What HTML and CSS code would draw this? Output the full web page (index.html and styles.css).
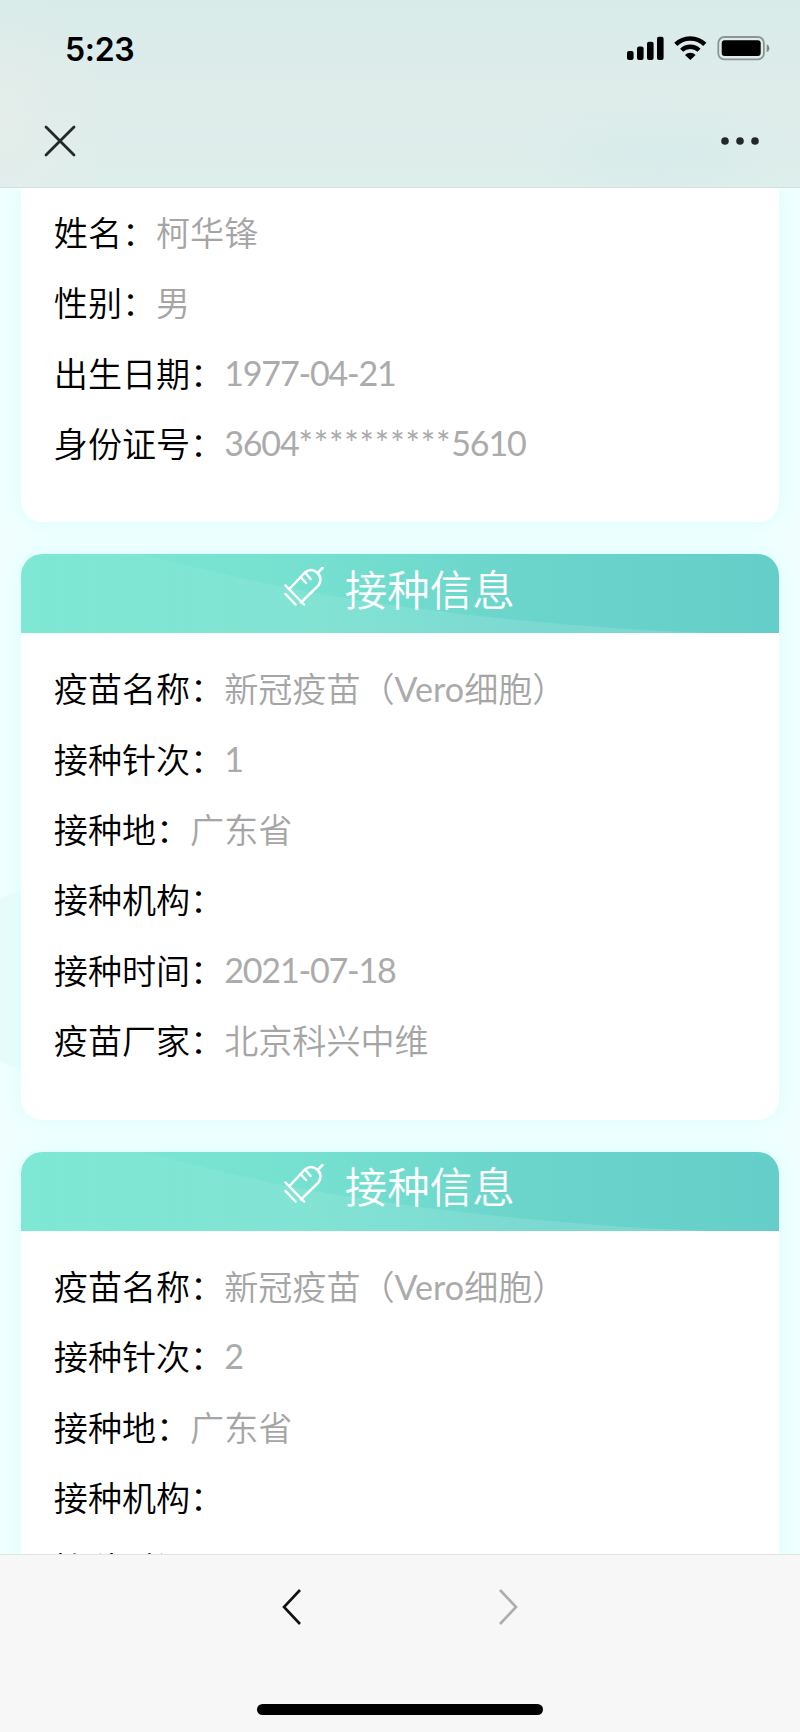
FILE: index.html
```html
<!DOCTYPE html>
<html lang="zh-CN">
<head>
    <meta charset="UTF-8">
    <meta name="viewport" content="width=device-width, initial-scale=1.0">
    <title>接种信息</title>
    <link rel="stylesheet" href="styles.css">
</head>
<body>
    <header class="top-bar">
        <div class="status-bar">
            <span class="time">5:23</span>
            <svg class="status-icons" width="144" height="26" viewBox="0 0 144 26">
                <!-- signal -->
                <rect x="1" y="15" width="6.6" height="9" rx="2"/>
                <rect x="11" y="10.5" width="6.6" height="13.5" rx="2"/>
                <rect x="21" y="5.7" width="6.6" height="18.3" rx="2"/>
                <rect x="31" y="0.7" width="6.6" height="23.3" rx="2"/>
                <!-- wifi -->
                <g fill="none" stroke="#000">
                    <path d="M49.8 8.4a20.6 20.6 0 0 1 29 0" stroke-width="4.5"/>
                    <path d="M55.6 14.3a12.4 12.4 0 0 1 17.4 0" stroke-width="4.3"/>
                </g>
                <path d="M59 18.9a7.6 7.6 0 0 1 10.6 0L64.3 24z"/>
                <!-- battery -->
                <rect x="92.3" y="1" width="45.6" height="22.4" rx="6" fill="none" stroke="#8b9594" stroke-width="1.8"/>
                <rect x="95.7" y="4.3" width="39" height="15.8" rx="3"/>
                <path d="M140.7 8.3q2.7 1.2 2.7 4t-2.7 4z" fill="#7f8988"/>
            </svg>
        </div>
        <nav class="nav-bar">
            <svg width="32" height="32" viewBox="0 0 32 32">
                <path d="M2 2l28 28M30 2L2 30" stroke="#222827" stroke-width="2.8" stroke-linecap="round"/>
            </svg>
            <svg width="40" height="10" viewBox="0 0 40 10" fill="#222827">
                <circle cx="5" cy="5" r="3.8"/>
                <circle cx="20" cy="5" r="3.8"/>
                <circle cx="35" cy="5" r="3.8"/>
            </svg>
        </nav>
    </header>

    <main class="content">
        <section class="card card-first">
            <div class="row"><span>姓名：</span><span class="value">柯华锋</span></div>
            <div class="row"><span>性别：</span><span class="value">男</span></div>
            <div class="row"><span>出生日期：</span><span class="value num">1977-04-21</span></div>
            <div class="row"><span>身份证号：</span><span class="value num">3604<span class="mask">**********</span>5610</span></div>
        </section>

        <section class="card">
            <div class="card-title">
                <svg class="wave" viewBox="0 0 758 79" preserveAspectRatio="none">
                    <defs>
                        <linearGradient id="waveFill">
                            <stop offset="0" stop-color="#fff" stop-opacity="0"/>
                            <stop offset="0.4" stop-color="#fff" stop-opacity="0.09"/>
                            <stop offset="1" stop-color="#fff" stop-opacity="0.14"/>
                        </linearGradient>
                    </defs>
                    <path fill="url(#waveFill)" d="M0 0H122Q190 18 261 33Q370 54 512 67.500Q600 76 690 79H0z"/>
                </svg>
                <svg class="syringe" width="40" height="40" viewBox="0 0 40 40">
                    <path d="M1.500 18.500L20 37.500M1.500 27L11.500 37.500M5.500 22L21 5.500Q27 .5 33 5.500T34.500 18.500L17 35.500M34 5.500L38.500 1M22 6.500L26.500 12M17.500 11L22 16"/>
                </svg>
                <h2>接种信息</h2>
            </div>
            <div class="card-body">
                <div class="row"><span>疫苗名称：</span><span class="value">新冠疫苗（<span class="latin">Vero</span>细胞）</span></div>
                <div class="row"><span>接种针次：</span><span class="value num">1</span></div>
                <div class="row"><span>接种地：</span><span class="value">广东省</span></div>
                <div class="row"><span>接种机构：</span></div>
                <div class="row"><span>接种时间：</span><span class="value num">2021-07-18</span></div>
                <div class="row"><span>疫苗厂家：</span><span class="value">北京科兴中维</span></div>
            </div>
        </section>

        <section class="card">
            <div class="card-title">
                <svg class="wave" viewBox="0 0 758 79" preserveAspectRatio="none">
                    <path fill="url(#waveFill)" d="M0 0H122Q190 18 261 33Q370 54 512 67.500Q600 76 690 79H0z"/>
                </svg>
                <svg class="syringe" width="40" height="40" viewBox="0 0 40 40">
                    <path d="M1.500 18.500L20 37.500M1.500 27L11.500 37.500M5.500 22L21 5.500Q27 .5 33 5.500T34.500 18.500L17 35.500M34 5.500L38.500 1M22 6.500L26.500 12M17.500 11L22 16"/>
                </svg>
                <h2>接种信息</h2>
            </div>
            <div class="card-body">
                <div class="row"><span>疫苗名称：</span><span class="value">新冠疫苗（<span class="latin">Vero</span>细胞）</span></div>
                <div class="row"><span>接种针次：</span><span class="value num">2</span></div>
                <div class="row"><span>接种地：</span><span class="value">广东省</span></div>
                <div class="row"><span>接种机构：</span></div>
                <div class="row"><span>接种时间：</span></div>
            </div>
        </section>
    </main>

    <footer class="bottom-bar">
        <div class="arrows">
            <svg width="20" height="38" viewBox="0 0 20 38">
                <path d="M18 2L2 19l16 17" stroke="#111"/>
            </svg>
            <svg width="20" height="38" viewBox="0 0 20 38">
                <path d="M2 2l16 17L2 36" stroke="#adadad"/>
            </svg>
        </div>
        <div class="home-indicator"></div>
    </footer>
</body>
</html>
```
FILE: styles.css
```css
* {
    box-sizing: border-box;
}
body {
    margin: 0;
    height: 1732px;
    display: flex;
    flex-direction: column;
    overflow: hidden;
    font-family: Lato, "Noto Sans CJK SC", sans-serif;
    background: #f0fffe;
}
.top-bar {
    flex: none;
    height: 188px;
    border-bottom: 1px solid #d3e0de;
    background: radial-gradient(ellipse 110px 130px at 0 120px, #e4edea, transparent),
        radial-gradient(ellipse 150px 50px at 660px 155px, #d8eceb, transparent),
        linear-gradient(#d8ebe9, #deecea 45%, #deeeeb);
}
.status-bar {
    display: flex;
    justify-content: space-between;
    align-items: center;
    height: 98px;
    padding: 0 30px 0 65px;
}
.time {
    font-family: Inter, sans-serif;
    font-size: 32px;
    font-weight: 600;
    letter-spacing: -0.3px;
}
.nav-bar {
    display: flex;
    justify-content: space-between;
    align-items: center;
    height: 85px;
    padding: 0 39.7px 0 44.3px;
}
.content {
    flex: 1;
    min-height: 0;
    overflow: hidden;
    padding: 0 21.3px;
    background: radial-gradient(circle 92px at 40px 792px, #e8fcfa 98%, transparent);
}
.card {
    margin-bottom: 32px;
    border-radius: 21.3px;
    background: #fff;
    box-shadow: 0 0 21px #d8ffff;
}
.card-first {
    height: 334.300px;
    padding: 10px 32.500px 0;
    border-radius: 0 0 21.3px 21.3px;
}
.card-title {
    position: relative;
    display: flex;
    align-items: center;
    height: 79px;
    padding-left: 263px;
    overflow: hidden;
    border-radius: 21.3px 21.3px 0 0;
    color: #fff;
    background: linear-gradient(90deg, #7ee8d4, #75e0cf 40%, #6bd5cc 65%, #65cec8);
}
.card-title h2 {
    position: relative;
    margin: -8px 0 0 20.500px;
    font-size: 42.500px;
    font-weight: 350;
    line-height: 60px;
}
/* light wave behind the title */
.wave {
    position: absolute;
    left: 0;
    top: 0;
    width: 100%;
    height: 100%;
}
.syringe {
    position: relative;
    margin-top: -14px;
    fill: none;
    stroke: #fff;
    stroke-width: 2.5;
    stroke-linecap: round;
}
.card-body {
    padding: 21px 32.500px 43.300px;
}
.row {
    display: flex;
    height: 70.400px;
    line-height: 70.400px;
    font-size: 34.100px;
    font-weight: 350;
    white-space: nowrap;
    color: #000;
}
.value {
    color: #a5a5a5;
}
.num {
    font-weight: 400;
    letter-spacing: -1.2px;
    margin-top: -1px;
    color: #ababab;
}
.mask {
    letter-spacing: 0.800px;
}
.latin {
    font-weight: 400;
    color: #ababab;
}
.bottom-bar {
    flex: none;
    display: flex;
    flex-direction: column;
    align-items: center;
    justify-content: space-between;
    height: 178px;
    padding: 33px 0 17px;
    border-top: 1px solid #e2e4e4;
    background: #f7f7f7;
}
.arrows {
    display: flex;
    gap: 196px;
}
.arrows path {
    fill: none;
    stroke-width: 2.6;
}
.home-indicator {
    width: 286px;
    height: 11px;
    border-radius: 6px;
    background: #000;
}
```
